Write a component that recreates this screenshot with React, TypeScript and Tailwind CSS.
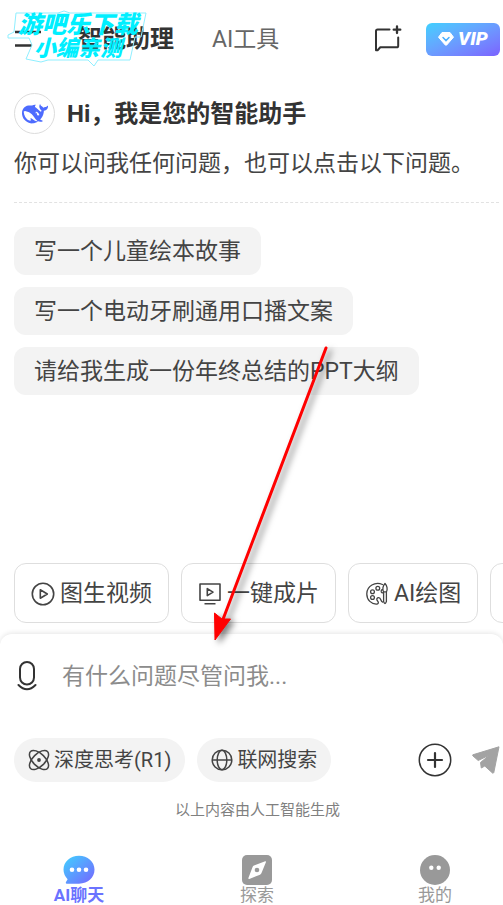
// App.tsx — mobile AI assistant home: header tabs, greeting, prompt
// suggestions, shortcut row, composer and bottom navigation.

import type { ReactNode } from "react";

const SUGGESTIONS = [
  "写一个儿童绘本故事",
  "写一个电动牙刷通用口播文案",
  "请给我生成一份年终总结的PPT大纲",
];

// ─── icons ────────────────────────────────────────────────────────────────

function MenuIcon() {
  return (
    <svg width="28" height="20" viewBox="0 0 28 20" stroke="#333" strokeWidth="2.4" aria-hidden="true">
      <path d="M0 3H26M0 16.5H17" />
    </svg>
  );
}

function NewChatIcon() {
  return (
    <svg width="28" height="28" viewBox="0 0 28 28" fill="none" stroke="#333" strokeWidth="2" strokeLinecap="round" strokeLinejoin="round" aria-hidden="true">
      <path d="M15.5 4.5H3.6Q2 4.5 2 6.1V25.2H3.6L6.3 22.300H22.600Q24.200 22.300 24.200 20.700V12.500" />
      <path d="M23 1.500V8M19.700 4.700H26.300" strokeWidth="2.300" />
    </svg>
  );
}

function DiamondIcon() {
  return (
    <svg width="16" height="14" viewBox="0 0 16 14" aria-hidden="true">
      <path d="M4 .5H12L15.500 5.200L8.700 13Q8 13.700 7.300 13L.5 5.200Z" fill="#fff" stroke="#fff" strokeLinejoin="round" />
      <path d="M5 5.500L8 8.600L11 5.500" fill="none" stroke="#4bb0ff" strokeWidth="1.500" strokeLinecap="round" />
    </svg>
  );
}

function WhaleIcon() {
  return (
    <svg width="26" height="26" viewBox="0 0 24 24" fill="#4d6bfe" aria-hidden="true">
      <path d="M23.748 4.482c-.254-.124-.364.113-.512.234-.051.039-.094.09-.137.136-.372.397-.806.657-1.373.626-.829-.046-1.537.214-2.163.848-.133-.782-.575-1.248-1.247-1.548-.352-.156-.708-.311-.955-.65-.172-.241-.219-.51-.305-.774-.055-.16-.11-.323-.293-.35-.2-.031-.278.136-.356.276-.313.572-.434 1.202-.422 1.84.027 1.436.633 2.58 1.838 3.393.137.093.172.187.129.323-.082.28-.18.552-.266.833-.055.179-.137.217-.329.14a5.526 5.526 0 01-1.736-1.18c-.857-.828-1.631-1.742-2.597-2.458a11.365 11.365 0 00-.689-.471c-.985-.957.13-1.743.388-1.836.27-.098.093-.432-.779-.428-.872.004-1.67.295-2.687.684a3.055 3.055 0 01-.465.137 9.597 9.597 0 00-2.883-.102c-1.885.21-3.39 1.102-4.497 2.623C.082 8.606-.231 10.684.152 12.85c.403 2.284 1.569 4.175 3.36 5.653 1.858 1.533 3.997 2.284 6.438 2.14 1.482-.085 3.133-.284 4.994-1.86.47.234.962.327 1.78.397.63.059 1.236-.03 1.705-.128.735-.156.684-.837.419-.961-2.155-1.004-1.682-.595-2.113-.926 1.096-1.296 2.746-2.642 3.392-7.003.05-.347.007-.565 0-.845-.004-.17.035-.237.23-.256a4.173 4.173 0 001.545-.475c1.396-.763 1.96-2.015 2.093-3.517.02-.23-.004-.467-.247-.588zM11.581 18c-2.089-1.642-3.102-2.183-3.52-2.16-.392.024-.321.471-.235.763.09.288.207.486.371.739.114.167.192.416-.113.603-.673.416-1.842-.14-1.897-.167-1.361-.802-2.5-1.86-3.301-3.307-.774-1.393-1.224-2.887-1.298-4.482-.02-.386.093-.522.477-.592a4.696 4.696 0 011.529-.039c2.132.312 3.946 1.265 5.468 2.774.868.86 1.525 1.887 2.202 2.891.72 1.066 1.494 2.082 2.48 2.914.348.292.625.514.891.677-.802.09-2.14.11-3.054-.614zm1-6.44a.306.306 0 01.415-.287.302.302 0 01.2.288.306.306 0 01-.31.307.303.303 0 01-.304-.308zm3.11 1.596c-.2.081-.399.151-.59.16a1.245 1.245 0 01-.798-.254c-.274-.23-.47-.358-.552-.758a1.73 1.73 0 01.016-.588c.07-.327-.008-.537-.239-.727-.187-.156-.426-.199-.688-.199a.559.559 0 01-.254-.078c-.11-.054-.2-.191-.114-.358.028-.054.16-.186.192-.21.356-.202.767-.136 1.146.016.352.144.618.408 1.001.782.391.451.462.576.685.914.176.265.336.537.445.848.067.195-.019.354-.25.452z" />
    </svg>
  );
}

function PlayCircleIcon() {
  return (
    <svg width="24" height="24" viewBox="0 0 24 24" fill="none" stroke="#444" strokeWidth="1.6" strokeLinejoin="round" aria-hidden="true">
      <circle cx="12" cy="12" r="10.7" />
      <path d="M9.3 7.8L16.3 12L9.3 16.2Z" />
    </svg>
  );
}

function PlayScreenIcon() {
  return (
    <svg width="24" height="24" viewBox="0 0 24 24" fill="none" stroke="#444" strokeWidth="1.6" strokeLinejoin="round" aria-hidden="true">
      <path d="M2 2H22V18.2H2ZM6.5 21.8H17.5" />
      <path d="M9.3 6.6L15 10.1L9.3 13.6Z" />
    </svg>
  );
}

function PaletteIcon() {
  return (
    <svg width="24" height="24" viewBox="0 0 24 24" fill="none" stroke="#444" strokeWidth="1.3" strokeLinecap="round" strokeLinejoin="round" aria-hidden="true">
      <path d="M17.5 2.5C10 -.6 2 4 1.8 11.7C1.7 18 6.5 22.5 12 22C14 21.5 13.5 20 12.4 18.8C11.2 17.2 12 15.6 13.8 15.7C16.3 15.9 15.2 19.3 17.6 20.2" />
      <circle cx="7.500" cy="9.700" r="1.900" />
      <circle cx="12.800" cy="6.200" r="1.900" />
      <circle cx="7.500" cy="15.500" r="1.900" />
      <path d="M20 1.500C17.800 3.700 17.200 7.600 18.600 9.800H21.400C22.800 7.600 22.200 3.700 20 1.500ZM18.600 9.800V19.500Q20 23.500 21.400 19.500V9.800M18 7.500Q15.800 7.600 16.300 10Q16.800 11.200 18.500 10.800" />
    </svg>
  );
}

function MicIcon() {
  return (
    <svg width="22" height="30" viewBox="0 0 22 30" fill="none" stroke="#333" strokeWidth="2" strokeLinecap="round" aria-hidden="true">
      <rect x="4" y="1" width="14" height="22.500" rx="7" />
      <path d="M2.500 24Q11 32.500 19.500 24" />
    </svg>
  );
}

function AtomIcon() {
  return (
    <svg width="22" height="22" viewBox="0 0 22 22" fill="none" stroke="#444" strokeWidth="1.5" aria-hidden="true">
      <ellipse cx="11" cy="11" rx="12" ry="6.2" transform="rotate(45 11 11)" />
      <ellipse cx="11" cy="11" rx="12" ry="6.2" transform="rotate(-45 11 11)" />
      <circle cx="11" cy="11" r="1.9" fill="#444" stroke="none" />
    </svg>
  );
}

function GlobeIcon() {
  return (
    <svg width="22" height="22" viewBox="0 0 22 22" fill="none" stroke="#444" strokeWidth="1.5" aria-hidden="true">
      <circle cx="11" cy="11" r="9.8" />
      <ellipse cx="11" cy="11" rx="4.8" ry="9.8" />
      <path d="M1.2 11H20.8" />
    </svg>
  );
}

function PlusCircleIcon() {
  return (
    <svg width="34" height="34" viewBox="0 0 34 34" fill="none" stroke="#333" aria-hidden="true">
      <circle cx="17" cy="17" r="15.700" strokeWidth="1.500" />
      <path d="M17 10V24M10 17H24" strokeWidth="2.200" strokeLinecap="round" />
    </svg>
  );
}

function SendIcon() {
  return (
    <svg width="28" height="28" viewBox="0 0 28 28" fill="#a3a3a3" stroke="#a3a3a3" strokeLinejoin="round" aria-hidden="true">
      <path d="M27 .8L.8 8.800Q.2 9.200.8 9.800L6.200 14.500L17.500 9L8.500 16.500L9.300 22L12.800 20L20.500 27Q21.300 27.500 21.800 26.500Z" />
    </svg>
  );
}

function ChatBubbleIcon() {
  return (
    <svg width="32" height="30" viewBox="0 0 32 30" aria-hidden="true">
      <defs>
        <linearGradient id="bubble" x1="0" y1="0" x2="1" y2="1">
          <stop offset="0" stopColor="#3fd2ff" />
          <stop offset="1" stopColor="#7764ff" />
        </linearGradient>
      </defs>
      <path d="M16 .8C24.600.8 31.500 6.600 31.500 14.600S25 28.700 16 28.700H3.500Q2.200 28.300 3 27L4.600 24.200Q.5 20 .5 14.600C.5 6.600 7.400.8 16 .8Z" fill="url(#bubble)" />
      <g fill="#fff">
        <circle cx="9" cy="14.700" r="2.300" />
        <circle cx="16" cy="14.700" r="2.300" />
        <circle cx="23" cy="14.700" r="2.300" />
      </g>
    </svg>
  );
}

function CompassIcon() {
  return (
    <svg width="30" height="30" viewBox="0 0 30 30" aria-hidden="true">
      <rect width="30" height="30" rx="5" fill="#999" />
      <path d="M23.200 6.300L12 10.600Q11 11 10.600 12L6.300 23.200Q6.300 24.200 7.300 24L18 19.700Q19 19.300 19.400 18.300L24 7Q24 6 23.200 6.300Z" fill="#fff" />
      <circle cx="15" cy="15" r="2.300" fill="#999" />
    </svg>
  );
}

function FaceIcon() {
  return (
    <svg width="30" height="30" viewBox="0 0 30 30" aria-hidden="true">
      <circle cx="15" cy="15" r="15" fill="#999" />
      <circle cx="11.300" cy="12.700" r="2.200" fill="#fff" />
      <circle cx="18.700" cy="12.700" r="2.200" fill="#fff" />
    </svg>
  );
}

// ─── small parts ──────────────────────────────────────────────────────────

function ShortcutButton({ icon, label }: { icon: ReactNode; label: string }) {
  return (
    <button
      type="button"
      className="flex h-[60px] shrink-0 items-center gap-[5px] rounded-xl border border-[#dedede] bg-white px-4 pt-[2px] text-[23px] leading-8 whitespace-nowrap"
    >
      {icon}
      {label}
    </button>
  );
}

function ModeButton({ icon, label }: { icon: ReactNode; label: string }) {
  return (
    <button
      type="button"
      className="flex h-11 shrink-0 items-center gap-1 rounded-full bg-[#f3f3f3] px-[14px] text-[20px] whitespace-nowrap"
    >
      {icon}
      {label}
    </button>
  );
}

function NavItem({ icon, label, active = false }: { icon: ReactNode; label: string; active?: boolean }) {
  return (
    <a
      href="#"
      className={
        active
          ? "flex w-[54px] flex-col items-center text-[17px] leading-5 font-bold whitespace-nowrap text-[#6b73ff]"
          : "flex w-[54px] flex-col items-center text-[17px] leading-5 whitespace-nowrap text-[#999]"
      }
    >
      {icon}
      {label}
    </a>
  );
}

// ─── overlays ─────────────────────────────────────────────────────────────

function Watermark() {
  return (
    <div className="pointer-events-none absolute top-[10px] left-[6px]">
      <svg width="142" height="58" viewBox="0 0 142 58" fill="none" stroke="#8fefff" aria-hidden="true">
        <path d="M10 3H52L58 1L64 3H140L135 27H129L124 50H92L88 56L82 50H42L35 52L20 49L26 35L23 28H2V25L8 22Z" />
      </svg>
      <div className="absolute top-0 left-3 text-[24px] leading-[30px] font-black whitespace-nowrap text-[#00efff] italic">
        游吧乐下载
      </div>
      <div className="absolute top-6 left-7 text-[22px] leading-[30px] font-black whitespace-nowrap text-[#00efff] italic">
        小编亲测
      </div>
    </div>
  );
}

function Arrow() {
  return (
    <svg
      className="pointer-events-none absolute top-[340px] left-[205px] drop-shadow-[4px_3px_3px_rgba(0,0,0,0.5)]"
      width="130"
      height="310"
      viewBox="0 0 130 310"
      aria-hidden="true"
    >
      <path d="M121 8L17 282" stroke="#f00" strokeWidth="3" strokeLinecap="round" />
      <path d="M10 300L9.500 273L17 279L25.500 279Z" fill="#f00" stroke="#f00" />
    </svg>
  );
}

// ─── App ──────────────────────────────────────────────────────────────────

export default function App() {
  return (
    <div className="relative flex min-h-screen flex-col overflow-hidden bg-white font-[Roboto,'Noto_Sans_CJK_SC',sans-serif] text-[#444]">
      <header className="flex h-[78px] items-center pr-[3px] pl-[15px]">
        <button type="button" aria-label="菜单" className="mr-[35px]">
          <MenuIcon />
        </button>
        <nav className="flex flex-1 items-center gap-[38px] whitespace-nowrap">
          <a href="#" className="text-[24px] font-bold text-[#333]">智能助理</a>
          <a href="#" className="pt-[2px] text-[23px] text-[#666]">AI工具</a>
        </nav>
        <button type="button" aria-label="新建对话" className="mr-6">
          <NewChatIcon />
        </button>
        <button
          type="button"
          className="flex h-[33px] w-[74px] items-center justify-center gap-1 rounded-md bg-linear-to-br from-[#3dd0ff] to-[#7b61ff] text-[19px] font-black text-white italic"
        >
          <DiamondIcon />
          VIP
        </button>
      </header>

      <main className="flex flex-1 flex-col px-[14px] pt-[15px]">
        <div className="flex items-center gap-3">
          <span className="flex size-[41px] items-center justify-center rounded-full border border-[#dcdcdc]">
            <WhaleIcon />
          </span>
          <h1 className="text-[24px] leading-8 font-bold text-[#333]">Hi，我是您的智能助手</h1>
        </div>
        <p className="mt-3 text-[23px] leading-9 whitespace-nowrap">
          你可以问我任何问题，也可以点击以下问题。
        </p>
        <hr className="mt-5 -mr-[10px] border-dashed border-[#e2e2e2]" />
        <div className="mt-6 flex flex-col items-start gap-3">
          {SUGGESTIONS.map((text) => (
            <button
              key={text}
              type="button"
              className="h-12 rounded-xl bg-[#f3f3f3] px-5 pt-[2px] text-[23px] whitespace-nowrap"
            >
              {text}
            </button>
          ))}
        </div>
      </main>

      <div className="flex gap-3 overflow-hidden pb-[11px] pl-[14px]">
        <ShortcutButton icon={<PlayCircleIcon />} label="图生视频" />
        <ShortcutButton icon={<PlayScreenIcon />} label="一键成片" />
        <ShortcutButton icon={<PaletteIcon />} label="AI绘图" />
        <button type="button" aria-label="更多" className="h-[60px] w-[130px] shrink-0 rounded-xl border border-[#dedede]" />
      </div>

      <div className="rounded-t-xl bg-white pt-[22px] shadow-[0_-1px_5px_rgba(0,0,0,0.1)]">
        <div className="flex items-center gap-6 px-4">
          <button type="button" aria-label="语音输入">
            <MicIcon />
          </button>
          <input
            type="text"
            aria-label="问题"
            placeholder="有什么问题尽管问我..."
            className="h-10 min-w-0 flex-1 text-[23px] outline-none placeholder:text-[#8c8c8c]"
          />
        </div>
        <div className="mt-[42px] flex items-center pr-[3px] pl-[14px]">
          <div className="flex flex-1 gap-3">
            <ModeButton icon={<AtomIcon />} label="深度思考(R1)" />
            <ModeButton icon={<GlobeIcon />} label="联网搜索" />
          </div>
          <button type="button" aria-label="添加" className="mr-5">
            <PlusCircleIcon />
          </button>
          <button type="button" aria-label="发送">
            <SendIcon />
          </button>
        </div>
        <p className="mt-[17px] pl-3 text-center text-[15px] leading-[22px] text-[#808080]">
          以上内容由人工智能生成
        </p>

        <nav className="flex justify-between pt-[34px] pr-[41px] pl-[52px]">
          <NavItem icon={<ChatBubbleIcon />} label="AI聊天" active />
          <NavItem icon={<CompassIcon />} label="探索" />
          <NavItem icon={<FaceIcon />} label="我的" />
        </nav>
      </div>

      <Arrow />
      <Watermark />
    </div>
  );
}
